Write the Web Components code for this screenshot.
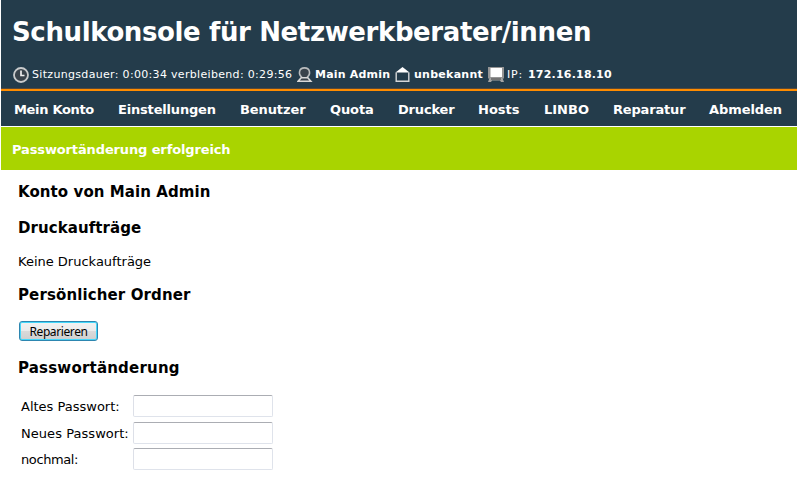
<!DOCTYPE html>
<html lang="de"><head><meta charset="utf-8"><title>Schulkonsole</title>
<style>body{margin:0;background:#fff;font-family:"DejaVu Sans",Verdana,sans-serif;color:#000}</style></head><body>
<school-console></school-console>
<script>
const define=(name,css,html,setup)=>customElements.define(name,class extends HTMLElement{
  constructor(){super();this.attachShadow({mode:'open'}).innerHTML=`<style>${css}</style>${html}`}
  connectedCallback(){
    const t=this.getAttribute('track');if(t)this.style.letterSpacing=t+'px';
    const w=this.getAttribute('w');if(w)this.style.width=w+'px';
    if(setup)setup(this);
  }
});
const icons={
clock:'<circle cx="8" cy="8" r="7" fill="#39434b" stroke="#c9cbcc" stroke-width="1.800"/><path d="M8 3.500v5h3.500" fill="none" stroke="#eee" stroke-width="1.700"/>',
person:'<path d="M5 10.500C0.800 7 2 .900 7.500.900S14.200 7 10 10.500" fill="#39434b" stroke="#b9bcbe" stroke-width="1.600"/><path d="M4.200 10.800h6.600l3 3.400H1.200z" fill="#39434b" stroke="#d8d8d8" stroke-width="1.600"/>',
house:'<path d="M7.500 0 14.500 5.500H.500z" fill="#fff"/><path d="M1.200 5.500v8.800h12.600V5.500" fill="none" stroke="#d4d6d8" stroke-width="1.400"/>',
screen:'<path d="M0 0h16v11.500H0z" fill="#959595"/><path d="M2.500 1h11.500v9h-11.500z" fill="#fff"/><path d="M1.500 11h13l1.500 4h-3l-1-1.500h-8L3 15H0z" fill="#a4a4a4"/><path d="M3 12h10" stroke="#444" stroke-width="1"/>'};
define('status-icon',':host{display:block;height:16px;flex:none}svg{display:block}','<svg width="16" height="16" viewBox="0 0 16 16"></svg>',
  e=>e.shadowRoot.querySelector('svg').innerHTML=icons[e.getAttribute('kind')]);
define('status-text',':host{display:block;flex:none;height:16px;font-size:11px;line-height:16px;white-space:nowrap}:host([strong]){font-weight:bold}','<slot></slot>');
define('status-bar',':host{display:flex;height:16px;color:#fff}','<slot></slot>');
define('page-title',':host{display:block;height:50px;color:#fff;font:bold 26px/30px "DejaVu Sans",Verdana,sans-serif;white-space:nowrap}','<slot></slot>');
define('page-head',':host{display:block;box-sizing:border-box;height:91px;background:#243c4b;border-bottom:2px solid #ff8c00;padding:17px 0 0 12px;box-shadow:inset 0 -1px #574a3a}','<slot></slot>');
define('nav-item',':host{display:block;flex:none;color:#fff;font-weight:bold;font-size:13px;line-height:20px;white-space:nowrap}','<slot></slot>');
define('nav-bar',':host{display:flex;box-sizing:border-box;height:35px;background:#243c4b;padding:9px 0 0 13px}','<slot></slot>');
define('success-message',':host{display:block;box-sizing:border-box;height:43px;margin-top:1px;background:#a9d400;color:#fff;padding:13px 0 0 11px;font:bold 13px/20px "DejaVu Sans",Verdana,sans-serif}','<slot></slot>');
define('section-title',':host{display:block;height:20px;font-size:15px;font-weight:bold;line-height:20px;white-space:nowrap}','<slot></slot>');
define('plain-text',':host{display:block;height:18px;font-size:13px;line-height:18px;white-space:nowrap}','<slot></slot>');
define('push-button',':host{display:block;width:79px;height:20px}button{box-sizing:border-box;width:79px;height:20px;padding:1px 0 0;border:1px solid #2d86b0;border-radius:3px;box-shadow:inset 0 0 0 1px #45d8fb;background:linear-gradient(#f2f2f2,#ebebeb 50%,#dadada 51%,#cfcfcf);font:12px/16px "Noto Sans",Tahoma,sans-serif;letter-spacing:-.4px;color:#000;display:block;white-space:nowrap}','<button type="button"><slot></slot></button>');
define('password-row',':host{display:grid;grid-template-columns:112px 140px;height:22px}span{font-size:13px;line-height:22px;white-space:nowrap;padding-top:1px;height:21px}input{box-sizing:border-box;width:140px;height:22px;margin:0;padding:0 3px;border:1px solid #dfe3eb;border-top-color:#abadb3;border-left-color:#dde0e8;border-radius:2px;background:#fff;outline:0}','<span><slot></slot></span><input type="password" aria-label="Passwort">');
define('account-panel',':host{display:flex;flex-direction:column;padding:12px 0 0 17px}','<slot></slot>');
define('school-console',':host{display:block;box-sizing:border-box;width:797px;height:477px;padding-left:1px;overflow:hidden}page-head{padding-left:11px}.form{display:grid;row-gap:0;padding-left:3px}',`
<page-head><page-title track="-.38">Schulkonsole für Netzwerkberater/innen</page-title>
<status-bar><status-icon kind="clock" w="19" style="margin-left:1px"></status-icon><status-text track=".32" w="265">Sitzungsdauer: 0:00:34 verbleibend: 0:29:56</status-text><status-icon kind="person" w="18"></status-icon><status-text strong track=".2" w="80">Main Admin</status-text><status-icon kind="house" w="19"></status-icon><status-text strong track=".27" w="74">unbekannt</status-text><status-icon kind="screen" w="19"></status-icon><status-text w="21" track=".8">IP:</status-text><status-text strong track=".2">172.16.18.10</status-text></status-bar></page-head>
<nav-bar><nav-item w="104" track="-.32">Mein Konto</nav-item><nav-item w="122" track="-.18">Einstellungen</nav-item><nav-item w="90" track="-.1">Benutzer</nav-item><nav-item w="68" track="-.1">Quota</nav-item><nav-item w="80" track="-.18">Drucker</nav-item><nav-item w="66">Hosts</nav-item><nav-item w="69">LINBO</nav-item><nav-item w="96" track="-.17">Reparatur</nav-item><nav-item track="-.08">Abmelden</nav-item></nav-bar>
<success-message track="-.13">Passwortänderung erfolgreich</success-message>
<account-panel>
<section-title track=".08">Konto von Main Admin</section-title>
<section-title track=".08" style="margin-top:16px">Druckaufträge</section-title>
<plain-text style="margin-top:15px">Keine Druckaufträge</plain-text>
<section-title track=".12" style="margin-top:14px">Persönlicher Ordner</section-title>
<push-button style="margin:16px 0 0 1px">Reparieren</push-button>
<section-title track=".2" style="margin-top:17px">Passwortänderung</section-title>
<div class="form" style="margin-top:17px"><password-row>Altes Passwort:</password-row><password-row track=".05" style="margin-top:5px">Neues Passwort:</password-row><password-row track="-.4" style="margin-top:4px">nochmal:</password-row></div>
</account-panel>`);
</script></body></html>
